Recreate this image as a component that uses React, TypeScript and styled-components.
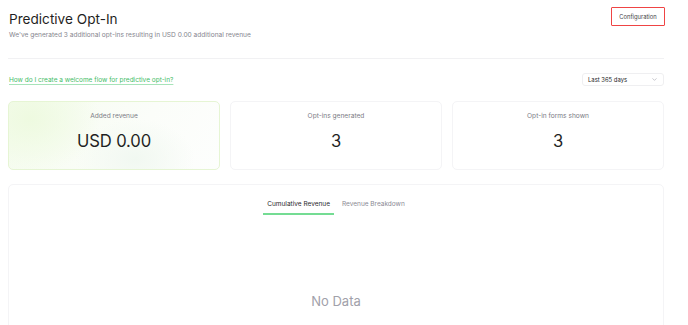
import React, { FC, useState } from 'react';
import styled, { createGlobalStyle } from 'styled-components';

const GlobalStyle = createGlobalStyle`
    body {
        margin: 0;
        background: #fff;
        font-family: Inter, 'Noto Sans', sans-serif;
        color: #18181b;
    }
`;

const Page = styled.div`
    width: 656px;
    padding: 0 24px 0 8px;
`;

const Header = styled.header`
    display: flex;
    justify-content: space-between;
    align-items: flex-start;
    padding-top: 9px;
    padding-bottom: 18px;
    border-bottom: 1px solid #f1f1f3;
`;

const Title = styled.h1`
    margin: 0 0 0 1px;
    font-size: 13.6px;
    line-height: 20px;
    font-weight: 400;
    color: #1f1f23;
`;

const Subtitle = styled.p`
    margin: 1px 0 0 1px;
    font-size: 6.6px;
    line-height: 10px;
    color: #85858e;
`;

const ConfigButton = styled.button`
    margin: -2px -1px 0 0;
    height: 19px;
    width: 54px;
    padding: 0;
    background: #fff;
    border: 1.5px solid #ef4444;
    border-radius: 1px;
    font-family: inherit;
    font-size: 5.8px;
    color: #3f3f46;
    cursor: pointer;
`;

const Toolbar = styled.div`
    display: flex;
    justify-content: space-between;
    align-items: center;
    margin-top: 14px;
`;

const HelpLink = styled.a`
    margin-left: 1px;
    font-size: 6.5px;
    color: #44bd68;
    text-decoration: underline;
    text-decoration-color: #a7e3b9;
    text-underline-offset: 2px;
`;

const Select = styled.button`
    display: flex;
    align-items: center;
    justify-content: space-between;
    width: 82px;
    height: 13px;
    padding: 0 5px;
    background: #fff;
    border: 1px solid #efeff1;
    border-radius: 3px;
    font-family: inherit;
    font-size: 5.9px;
    color: #27272a;
    svg {
        color: #a1a1aa;
    }
`;

const Stats = styled.div`
    display: grid;
    grid-template-columns: repeat(3, 1fr);
    gap: 10px;
    margin-top: 15px;
`;

const StatCard = styled.div<{ $highlight?: boolean }>`
    height: 69px;
    box-sizing: border-box;
    border: 1px solid ${(p) => (p.$highlight ? '#e6f5d4' : '#f4f4f6')};
    border-radius: 5px;
    display: flex;
    flex-direction: column;
    align-items: center;
    padding-top: 9px;
    background: ${(p) =>
        p.$highlight
            ? 'radial-gradient(ellipse 70px 55px at 10% 25%, #eefae0 0%, rgba(238,250,224,0) 100%), radial-gradient(ellipse 60px 40px at 60% 85%, #f1f8f1 0%, rgba(241,248,241,0) 100%), linear-gradient(120deg, #f5fcee 0%, #fbfdf9 60%, #fdfefd 100%)'
            : '#fff'};
`;

const StatLabel = styled.span`
    font-size: 6.6px;
    line-height: 10px;
    color: #7a7a84;
`;

const StatValue = styled.span`
    margin-top: 9px;
    font-size: 16.6px;
    line-height: 22px;
    letter-spacing: -0.1px;
    color: #1f1f23;
`;

const ChartCard = styled.section`
    margin-top: 14px;
    height: 160px;
    border: 1px solid #f4f4f6;
    border-radius: 5px;
    display: flex;
    flex-direction: column;
    align-items: center;
`;

const Tabs = styled.div`
    display: flex;
    gap: 4px;
    margin-top: 14px;
`;

const Tab = styled.button<{ $active?: boolean }>`
    padding: 0 4px 4px;
    background: none;
    border: none;
    border-bottom: 2px solid ${(p) => (p.$active ? '#74dc93' : 'transparent')};
    font-family: inherit;
    font-size: 6.5px;
    line-height: 10px;
    color: ${(p) => (p.$active ? '#27272a' : '#8a8a94')};
    cursor: pointer;
`;

const Empty = styled.div`
    margin-top: 78px;
    font-size: 13px;
    line-height: 16px;
    color: #a1a1aa;
`;

const stats = [
    { label: 'Added revenue', value: 'USD 0.00', highlight: true },
    { label: 'Opt-ins generated', value: '3' },
    { label: 'Opt-in forms shown', value: '3' },
];

const App: FC = () => {
    const [tab, setTab] = useState('cumulative');

    return (
        <Page>
            <GlobalStyle />
            <Header>
                <div>
                    <Title>Predictive Opt-In</Title>
                    <Subtitle>
                        We've generated 3 additional opt-ins resulting in USD 0.00 additional revenue
                    </Subtitle>
                </div>
                <ConfigButton>Configuration</ConfigButton>
            </Header>

            <Toolbar>
                <HelpLink href="#">How do I create a welcome flow for predictive opt-in?</HelpLink>
                <Select>
                    Last 365 days
                    <svg width="7" height="7" viewBox="0 0 24 24" fill="none" stroke="currentColor" strokeWidth="2" strokeLinecap="round" strokeLinejoin="round">
                        <path d="M6 9l6 6 6-6" />
                    </svg>
                </Select>
            </Toolbar>

            <Stats>
                {stats.map((s) => (
                    <StatCard key={s.label} $highlight={s.highlight}>
                        <StatLabel>{s.label}</StatLabel>
                        <StatValue>{s.value}</StatValue>
                    </StatCard>
                ))}
            </Stats>

            <ChartCard>
                <Tabs>
                    <Tab $active={tab === 'cumulative'} onClick={() => setTab('cumulative')}>
                        Cumulative Revenue
                    </Tab>
                    <Tab $active={tab === 'breakdown'} onClick={() => setTab('breakdown')}>
                        Revenue Breakdown
                    </Tab>
                </Tabs>
                <Empty>No Data</Empty>
            </ChartCard>
        </Page>
    );
};

export default App;
